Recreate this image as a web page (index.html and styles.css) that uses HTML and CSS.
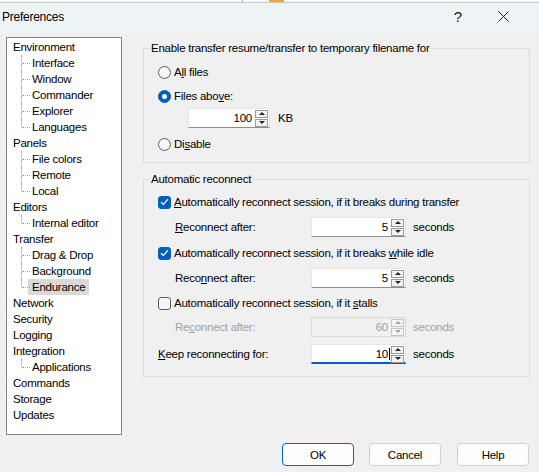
FILE: index.html
```html
<!DOCTYPE html>
<html>
<head>
<meta charset="utf-8">
<title>Preferences</title>
<link rel="stylesheet" href="styles.css">
</head>
<body>
<div class="window">
  <div class="bgstrip"><span class="bs-a"></span><span class="bs-b"></span><span class="bs-c"></span><span class="bs-d"></span></div>
  <div class="titlebar">
    <span class="title">Preferences</span>
    <span class="help">?</span>
    <span class="close"><svg width="11" height="11" viewBox="0 0 11 11"><path d="M0.5 0.5 L10.5 10.5 M10.5 0.5 L0.5 10.5" stroke="#1a1a1a" stroke-width="1" fill="none"/></svg></span>
  </div>
  <div class="main">
    <ul class="tree">
      <li class="node">Environment</li>
      <li class="child"><span>Interface</span></li>
      <li class="child"><span>Window</span></li>
      <li class="child"><span>Commander</span></li>
      <li class="child"><span>Explorer</span></li>
      <li class="child last"><span>Languages</span></li>
      <li class="node">Panels</li>
      <li class="child"><span>File colors</span></li>
      <li class="child"><span>Remote</span></li>
      <li class="child last"><span>Local</span></li>
      <li class="node">Editors</li>
      <li class="child last"><span>Internal editor</span></li>
      <li class="node">Transfer</li>
      <li class="child"><span>Drag &amp; Drop</span></li>
      <li class="child"><span>Background</span></li>
      <li class="child last"><span class="selected">Endurance</span></li>
      <li class="node">Network</li>
      <li class="node">Security</li>
      <li class="node">Logging</li>
      <li class="node">Integration</li>
      <li class="child last"><span>Applications</span></li>
      <li class="node">Commands</li>
      <li class="node">Storage</li>
      <li class="node">Updates</li>
    </ul>
    <div class="pane">
      <fieldset class="group g1">
        <legend>Enable transfer resume/transfer to temporary filename for</legend>
        <div class="row"><span class="radio"></span><span>A<u>l</u>l files</span></div>
        <div class="row"><span class="radio on"></span><span>Files abo<u>v</u>e:</span></div>
        <div class="row spinrow">
          <span class="spin w82"><span class="val">100</span><span class="arrows"><span class="up"></span><span class="dn"></span></span></span>
          <span class="unit">KB</span>
        </div>
        <div class="row"><span class="radio"></span><span>Di<u>s</u>able</span></div>
      </fieldset>
      <fieldset class="group g2">
        <legend>Automatic reconnect</legend>
        <div class="row"><span class="check on"><svg width="9" height="8" viewBox="0 0 9 8"><path d="M1 4.2 L3.4 6.5 L8 1.2" stroke="#fff" stroke-width="1.2" fill="none"/></svg></span><span><u>A</u>utomatically reconnect session, if it breaks during transfer</span></div>
        <div class="row m1"><span class="lbl sub"><u>R</u>econnect after:</span>
          <span class="spin w95"><span class="val">5</span><span class="arrows"><span class="up"></span><span class="dn"></span></span></span>
          <span class="unit">seconds</span></div>
        <div class="row m2"><span class="check on"><svg width="9" height="8" viewBox="0 0 9 8"><path d="M1 4.2 L3.4 6.5 L8 1.2" stroke="#fff" stroke-width="1.2" fill="none"/></svg></span><span>Automatically reconnect session, if it breaks <u>w</u>hile idle</span></div>
        <div class="row m1"><span class="lbl sub">Reco<u>n</u>nect after:</span>
          <span class="spin w95"><span class="val">5</span><span class="arrows"><span class="up"></span><span class="dn"></span></span></span>
          <span class="unit">seconds</span></div>
        <div class="row m1"><span class="check"></span><span>Automatically reconnect session, if it <u>s</u>talls</span></div>
        <div class="row disabled"><span class="lbl sub">Re<u>c</u>onnect after:</span>
          <span class="spin w95 dis"><span class="val">60</span><span class="arrows"><span class="up"></span><span class="dn"></span></span></span>
          <span class="unit">seconds</span></div>
        <div class="row m3"><span class="lbl keep"><u>K</u>eep reconnecting for:</span>
          <span class="spin w95 focus"><span class="val">10<span class="caret"></span></span><span class="arrows"><span class="up"></span><span class="dn"></span></span></span>
          <span class="unit">seconds</span></div>
      </fieldset>
    </div>
  </div>
  <div class="buttons">
    <button class="btn default">OK</button>
    <button class="btn">Cancel</button>
    <button class="btn helpbtn">Help</button>
  </div>
</div>
</body>
</html>
```
FILE: styles.css
```css
html, body {
  margin: 0;
  padding: 0;
}
body {
  width: 539px;
  height: 472px;
  overflow: hidden;
  background: #f0f0f0;
  font-family: "Liberation Sans", Arial, sans-serif;
  font-size: 11.5px;
  letter-spacing: -0.25px;
  color: #000;
}
.window {
  width: 539px;
  height: 472px;
  display: flex;
  flex-direction: column;
}
.bgstrip {
  height: 3px;
  display: flex;
  background: #f6f8f9;
  box-sizing: border-box;
  border-bottom: 1px solid #c8c8c8;
}
.bgstrip .bs-a { width: 242px; border-right: 1px solid #a8a8a8; }
.bgstrip .bs-b { width: 26px; border-right: 1px solid #a8a8a8; }
.bgstrip .bs-c { width: 14px; background: #e8a83a; }
.bgstrip .bs-d { flex: 1; }
.titlebar {
  height: 27px;
  display: flex;
  align-items: center;
  background: #eef4f6;
  padding-bottom: 3px;
}
.title {
  margin-left: 2px;
  flex: 1;
  font-size: 12px;
}
.help {
  font-size: 15px;
  letter-spacing: 0;
  margin-right: 36px;
  color: #1a1a1a;
}
.close {
  display: flex;
  margin-right: 30px;
}
.main {
  display: flex;
  padding: 4px 9px 0 6px;
}
.tree {
  list-style: none;
  margin: 0;
  padding: 1px 0 0 6px;
  width: 116px;
  height: 398px;
  box-sizing: border-box;
  background: #fff;
  border: 1px solid #868686;
}
.tree li {
  height: 16px;
  line-height: 16px;
  white-space: nowrap;
}
.tree .child {
  position: relative;
}
.tree .child::before {
  content: "";
  position: absolute;
  left: 8px;
  top: 0;
  bottom: 0;
  border-left: 1px dotted #a0a0a0;
}
.tree .child.last::before {
  bottom: 8px;
}
.tree .child::after {
  content: "";
  position: absolute;
  left: 9px;
  top: 8px;
  width: 8px;
  border-top: 1px dotted #a0a0a0;
}
.tree .child span {
  display: inline-block;
  margin-left: 15px;
  padding: 0 4px;
}
.tree .child span.selected {
  background: #d9d9d9;
  padding-right: 4px;
}
.pane {
  margin-left: 21px;
  width: 387px;
  display: flex;
  flex-direction: column;
}
.group {
  margin: 0;
  border: 1px solid #dcdcdc;
  padding: 0 0 0 14px;
  min-width: 0;
}
.group legend {
  padding: 0 1px;
  margin-left: -8px;
  line-height: 16px;
}
.g1 {
  margin-top: 3px;
  padding-top: 4px;
  padding-bottom: 6px;
}
.g2 {
  margin-top: 8px;
  padding-top: 3px;
  padding-bottom: 10px;
}
.row {
  height: 24px;
  display: flex;
  align-items: center;
  white-space: nowrap;
}
.row.m1 { margin-top: 1px; }
.row.m2 { margin-top: 2px; }
.row.m3 { margin-top: 3px; }
.spinrow {
  align-items: flex-start;
  padding-left: 30px;
}
.spinrow .unit {
  align-self: center;
  margin-top: -4px;
}
.radio {
  width: 13px;
  height: 13px;
  box-sizing: border-box;
  border: 1px solid #5c5c5c;
  border-radius: 50%;
  background: #f6f6f6;
  margin-right: 3px;
  display: flex;
  align-items: center;
  justify-content: center;
}
.radio.on {
  background: #005fb8;
  border-color: #005fb8;
}
.radio.on::after {
  content: "";
  width: 5px;
  height: 5px;
  border-radius: 50%;
  background: #fff;
}
.check {
  width: 13px;
  height: 13px;
  box-sizing: border-box;
  border: 1px solid #5c5c5c;
  border-radius: 3px;
  background: #f6f6f6;
  margin-right: 3px;
  display: flex;
  align-items: center;
  justify-content: center;
}
.check.on {
  background: #005fb8;
  border-color: #005fb8;
}
.lbl {
  display: inline-block;
}
.lbl.sub {
  margin-left: 17px;
  width: 136px;
}
.lbl.keep {
  width: 153px;
}
.spin {
  height: 20px;
  box-sizing: border-box;
  background: #fff;
  border: 1px solid #e6e6e6;
  border-bottom-color: #8d8d8d;
  display: flex;
  align-items: center;
  justify-content: flex-end;
  padding-right: 1px;
}
.spin.w82 { width: 82px; }
.spin.w95 { width: 95px; }
.spin .val {
  margin-right: 3px;
  position: relative;
}
.caret {
  position: absolute;
  right: -2px;
  top: 0;
  bottom: 0;
  border-left: 1px solid #000;
}
.arrows {
  display: flex;
  flex-direction: column;
  gap: 1px;
}
.up, .dn {
  width: 13px;
  height: 8px;
  box-sizing: border-box;
  border: 1px solid #9a9a9a;
  background: #f3f3f3;
  display: flex;
  align-items: center;
  justify-content: center;
}
.up::after {
  content: "";
  border-left: 3px solid transparent;
  border-right: 3px solid transparent;
  border-bottom: 3px solid #222;
}
.dn::after {
  content: "";
  border-left: 3px solid transparent;
  border-right: 3px solid transparent;
  border-top: 3px solid #222;
}
.unit {
  margin-left: 7px;
}
.spinrow .unit {
  margin-left: 8px;
}
.disabled {
  color: #a0a0a0;
}
.spin.dis {
  background: #f0f0f0;
  border-color: #dadada;
}
.spin.dis .up, .spin.dis .dn {
  border-color: #c6c6c6;
  background: #f4f4f4;
}
.spin.dis .up::after { border-bottom-color: #a0a0a0; }
.spin.dis .dn::after { border-top-color: #a0a0a0; }
.spin.focus {
  border-bottom: 2px solid #005fb8;
  padding-top: 1px;
}
.buttons {
  display: flex;
  justify-content: flex-end;
  padding: 8px 10px 0 0;
}
.btn {
  width: 72px;
  height: 23px;
  box-sizing: border-box;
  border: 1px solid #d0d0d0;
  border-radius: 4px;
  background: #fdfdfd;
  font-family: "Liberation Sans", Arial, sans-serif;
  font-size: 11.5px;
  letter-spacing: -0.25px;
  color: #000;
  padding: 0;
  margin-left: 15px;
}
.btn.default {
  border-color: #0067c0;
}
.btn.helpbtn {
  margin-left: 16px;
}
```
